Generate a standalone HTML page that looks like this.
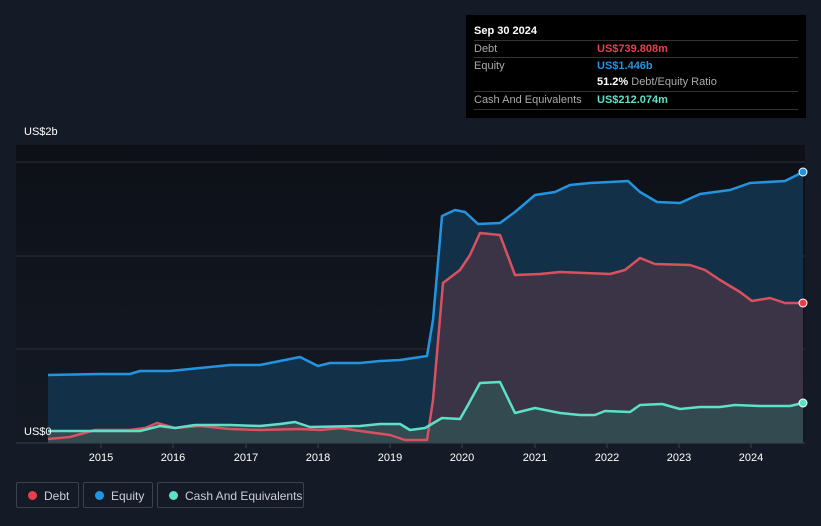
<!DOCTYPE html>
<html><head><meta charset="utf-8"><style>
body{margin:0;width:821px;height:526px;background:#151b26;font-family:"Liberation Sans",sans-serif;overflow:hidden;position:relative}
.tt{position:absolute;left:466px;top:15px;width:340px;height:103px;background:#000;color:#fff;font-size:11px}
.tt .h{position:absolute;left:8px;top:10px;font-weight:bold;font-size:11px}
.row{position:absolute;left:8px;width:324px;border-top:1px solid #333;height:17px;line-height:17px}
.row .l{position:absolute;left:0;color:#aaa}
.row .v{position:absolute;left:123px;font-weight:bold}
.lg{position:absolute;top:482px;height:26px;border:1px solid #3a4150;border-radius:2px;color:#ccd;font-size:12px;line-height:26px;box-sizing:border-box}
.lg i{position:absolute;left:11px;top:8px;width:9px;height:9px;border-radius:50%}
.lg span{position:absolute;left:27px}
</style></head><body>
<svg width="821" height="526" style="position:absolute;left:0;top:0">
<defs><linearGradient id="bg" x1="0" y1="0" x2="0" y2="1"><stop offset="0" stop-color="#0d1017"/><stop offset="1" stop-color="#141a25"/></linearGradient></defs>
<rect x="16" y="145" width="789" height="298" fill="url(#bg)"/>
<line x1="16" y1="162" x2="805" y2="162" stroke="#2a2f3a"/>
<line x1="16" y1="256" x2="805" y2="256" stroke="#2a2f3a"/>
<line x1="16" y1="349" x2="805" y2="349" stroke="#2a2f3a"/>
<path d="M48,375 L100,374 130,374 140,371 170,371 200,368 230,365 260,365 280,361 300,357 318,366 330,363 360,363 380,361 400,360 427,356 433,320 442,216 455,210 465,212 478,224 500,223 515,212 535,195 555,192 570,185 590,183 610,182 628,181 640,192 657,202 680,203 700,194 730,190 750,183 785,181 803,172 L803,443 L48,443Z" fill="#133049"/>
<path d="M48,439 L70,437 95,430 130,430 145,428 157,423 175,428 200,426 230,429 260,430 300,429 320,430 340,428 360,431 390,435 405,440 427,440 433,400 443,283 460,270 470,255 480,233 500,235 515,275 540,274 560,272 610,274 625,270 640,258 655,264 690,265 705,270 720,280 740,292 752,301 770,298 785,303 803,303 L803,443 L48,443Z" fill="#3a3446"/>
<path d="M48,431 L100,431 140,431 160,426 175,428 195,425 230,425 260,426 280,424 295,422 310,427 360,426 380,424 400,424 410,430 425,428 442,418 460,419 468,405 480,383 500,382 515,413 535,408 560,413 580,415 595,415 605,411 630,412 640,405 662,404 680,409 700,407 720,407 735,405 760,406 790,406 803,403 L803,443 L48,443Z" fill="#324a50"/>
<path d="M48,375 L100,374 130,374 140,371 170,371 200,368 230,365 260,365 280,361 300,357 318,366 330,363 360,363 380,361 400,360 427,356 433,320 442,216 455,210 465,212 478,224 500,223 515,212 535,195 555,192 570,185 590,183 610,182 628,181 640,192 657,202 680,203 700,194 730,190 750,183 785,181 803,172" fill="none" stroke="#2394e0" stroke-width="2.5" stroke-linejoin="round"/>
<path d="M48,439 L70,437 95,430 130,430 145,428 157,423 175,428 200,426 230,429 260,430 300,429 320,430 340,428 360,431 390,435 405,440 427,440 433,400 443,283 460,270 470,255 480,233 500,235 515,275 540,274 560,272 610,274 625,270 640,258 655,264 690,265 705,270 720,280 740,292 752,301 770,298 785,303 803,303" fill="none" stroke="#d9515f" stroke-width="2.5" stroke-linejoin="round"/>
<path d="M48,431 L100,431 140,431 160,426 175,428 195,425 230,425 260,426 280,424 295,422 310,427 360,426 380,424 400,424 410,430 425,428 442,418 460,419 468,405 480,383 500,382 515,413 535,408 560,413 580,415 595,415 605,411 630,412 640,405 662,404 680,409 700,407 720,407 735,405 760,406 790,406 803,403" fill="none" stroke="#5ee0c8" stroke-width="2.5" stroke-linejoin="round"/>
<circle cx="803" cy="172" r="4" fill="#2394e0" stroke="#fff" stroke-width="1"/>
<circle cx="803" cy="303" r="4" fill="#e8404a" stroke="#fff" stroke-width="1"/>
<circle cx="803" cy="403" r="4" fill="#5ee0c8" stroke="#fff" stroke-width="1"/>
<line x1="16" y1="443" x2="805" y2="443" stroke="#3a404c"/>
<g stroke="#3a404c"><line x1="101" y1="443" x2="101" y2="448"/><line x1="173" y1="443" x2="173" y2="448"/><line x1="246" y1="443" x2="246" y2="448"/><line x1="318" y1="443" x2="318" y2="448"/><line x1="390" y1="443" x2="390" y2="448"/><line x1="462" y1="443" x2="462" y2="448"/><line x1="535" y1="443" x2="535" y2="448"/><line x1="607" y1="443" x2="607" y2="448"/><line x1="679" y1="443" x2="679" y2="448"/><line x1="751" y1="443" x2="751" y2="448"/></g>
<g fill="#fff" font-size="11" text-anchor="middle" font-family="Liberation Sans"><text x="101" y="461">2015</text><text x="173" y="461">2016</text><text x="246" y="461">2017</text><text x="318" y="461">2018</text><text x="390" y="461">2019</text><text x="462" y="461">2020</text><text x="535" y="461">2021</text><text x="607" y="461">2022</text><text x="679" y="461">2023</text><text x="751" y="461">2024</text></g>
<text x="24" y="135" fill="#fff" font-size="11" font-family="Liberation Sans">US$2b</text>
<text x="24" y="435" fill="#fff" font-size="11" font-family="Liberation Sans">US$0</text>
</svg>
<div class="tt"><div class="h">Sep 30 2024</div>
<div class="row" style="top:25px"><span class="l">Debt</span><span class="v" style="color:#e8404a">US$739.808m</span></div>
<div class="row" style="top:42px"><span class="l">Equity</span><span class="v" style="color:#2394e0">US$1.446b</span></div>
<div class="row" style="top:59px;border-top:none"><span class="v" style="color:#fff">51.2% <span style="color:#aaa;font-weight:normal">Debt/Equity Ratio</span></span></div>
<div class="row" style="top:76px"><span class="l">Cash And Equivalents</span><span class="v" style="color:#5ee0c8">US$212.074m</span></div>
<div class="row" style="top:94px;height:1px"></div>
</div>
<div class="lg" style="left:16px;width:63px"><i style="background:#e8404a"></i><span>Debt</span></div>
<div class="lg" style="left:83px;width:70px"><i style="background:#2394e0"></i><span>Equity</span></div>
<div class="lg" style="left:157px;width:147px"><i style="background:#5ee0c8"></i><span>Cash And Equivalents</span></div>
</body></html>
